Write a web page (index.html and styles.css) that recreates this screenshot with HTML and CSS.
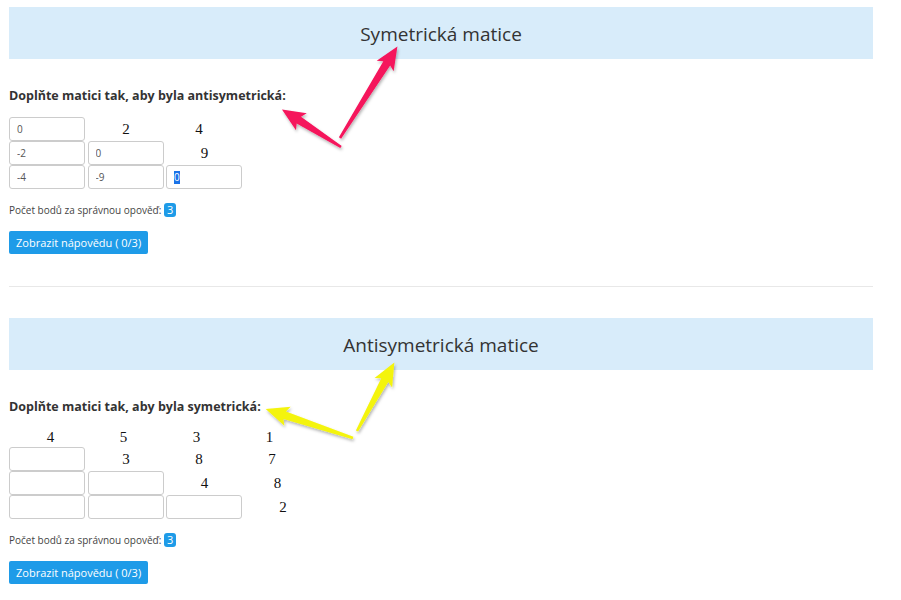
FILE: index.html
```html
<!DOCTYPE html>
<html lang="cs">
<head>
    <meta charset="UTF-8">
    <meta name="viewport" content="width=device-width, initial-scale=1.0">
    <title>Matice</title>
    <link rel="stylesheet" href="styles.css">
</head>
<body>
    <div class="page">
        <section class="task">
            <h2 class="task-title">Symetrická matice</h2>
            <p class="task-label">Doplňte matici tak, aby byla antisymetrická:</p>
            <div class="matrix">
                <div class="mrow">
                    <input class="cell" type="text" value="0">
                    <span class="num">2</span>
                    <span class="num">4</span>
                </div>
                <div class="mrow">
                    <input class="cell" type="text" value="-2">
                    <input class="cell" type="text" value="0">
                    <span class="num">9</span>
                </div>
                <div class="mrow">
                    <input class="cell" type="text" value="-4">
                    <input class="cell" type="text" value="-9">
                    <!-- focused input with its text selected -->
                    <div class="cell cell-focus"><span class="sel">0</span></div>
                </div>
            </div>
            <p class="points">Počet bodů za správnou opověď: <span class="badge">3</span></p>
            <button class="btn">Zobrazit nápovědu ( 0/3)</button>
        </section>

        <hr class="divider">

        <section class="task">
            <h2 class="task-title">Antisymetrická matice</h2>
            <p class="task-label">Doplňte matici tak, aby byla symetrická:</p>
            <div class="matrix">
                <div class="mrow mrow-head">
                    <span class="num">4</span>
                    <span class="num">5</span>
                    <span class="num">3</span>
                    <span class="num">1</span>
                </div>
                <div class="mrow">
                    <input class="cell" type="text">
                    <span class="num">3</span>
                    <span class="num">8</span>
                    <span class="num">7</span>
                </div>
                <div class="mrow">
                    <input class="cell" type="text">
                    <input class="cell" type="text">
                    <span class="num">4</span>
                    <span class="num">8</span>
                </div>
                <div class="mrow">
                    <input class="cell" type="text">
                    <input class="cell" type="text">
                    <input class="cell" type="text">
                    <span class="num">2</span>
                </div>
            </div>
            <p class="points">Počet bodů za správnou opověď: <span class="badge">3</span></p>
            <button class="btn">Zobrazit nápovědu ( 0/3)</button>
        </section>
    </div>

    <!-- annotation arrows drawn over the page -->
    <svg class="arrows" width="901" height="600" viewBox="0 0 901 600">
        <defs>
            <filter id="shadow" x="-20%" y="-20%" width="140%" height="140%">
                <feDropShadow dx="1" dy="2" stdDeviation="1.5" flood-color="#000" flood-opacity="0.3"/>
            </filter>
        </defs>
        <g class="pink" filter="url(#shadow)">
            <polygon transform="translate(340 138) rotate(-57.9)" points="0,-1.3 88,-4 85,-10 108,0 85,10 88,4 0,1.3"/>
            <polygon transform="translate(341 147) rotate(-147.5)" points="0,-1.3 50,-4 47,-10 70,0 47,10 50,4 0,1.3"/>
        </g>
        <g class="yellow" filter="url(#shadow)">
            <polygon transform="translate(357 431) rotate(-61.4)" points="0,-1.3 58,-4 55,-10 78,0 55,10 58,4 0,1.3"/>
            <polygon transform="translate(353 438) rotate(-161.6)" points="0,-1.3 72,-4 69,-10 92,0 69,10 72,4 0,1.3"/>
        </g>
    </svg>
</body>
</html>
```

FILE: styles.css
```css
html, body {
    margin: 0;
    font-family: "Open Sans", "DejaVu Sans", sans-serif;
    color: #333;
    background: #fff;
}

.page {
    width: 864px;
    margin-left: 9px;
    padding-top: 7px;
}

.task-title {
    margin: 0;
    height: 52px;
    line-height: 54px;
    background-color: #d8ecfa;
    text-align: center;
    font-size: 19px;
    font-weight: 400;
    color: #333;
}

.task-label {
    margin: 28px 0 0;
    font-size: 12.5px;
    line-height: 18px;
    font-weight: 700;
    color: #333;
}

.matrix {
    margin-top: 12px;
}

.mrow {
    display: flex;
    align-items: center;
    height: 24px;
}

.mrow-head {
    height: 19px;
}

.cell {
    box-sizing: border-box;
    width: 76px;
    height: 24px;
    margin: 0 2.5px 0 0;
    padding: 0 7px;
    border: 1px solid #ccc;
    border-radius: 3px;
    background: #fff;
    font-family: "Open Sans", "DejaVu Sans", sans-serif;
    font-size: 10px;
    color: #555;
    outline: none;
}

.cell-focus {
    display: flex;
    align-items: center;
}

.sel {
    background-color: #1a73e8;
    color: #fff;
    line-height: 13px;
}

.num {
    width: 73px;
    text-align: center;
    font-family: "Liberation Serif", "DejaVu Serif", serif;
    font-size: 15px;
    color: #111;
}

.cell + .num {
    margin-left: 2px;
}

.mrow-head .num:first-child {
    margin-left: 5px;
}

.points {
    margin: 14px 0 0;
    font-size: 10px;
    line-height: 14px;
    color: #444;
}

.badge {
    display: inline-block;
    padding: 0 3px;
    border-radius: 3px;
    background-color: #1e9be8;
    color: #fff;
    font-size: 11px;
    line-height: 14px;
}

.btn {
    display: block;
    height: 23px;
    margin-top: 14px;
    padding: 0 7px;
    border: 0;
    border-radius: 2px;
    background-color: #1e9be8;
    color: #fff;
    font-family: "Open Sans", "DejaVu Sans", sans-serif;
    font-size: 11px;
    cursor: pointer;
}

.divider {
    margin: 32px 0 31px;
    border: 0;
    border-top: 1px solid #e8e8e8;
}

.arrows {
    position: absolute;
    top: 0;
    left: 0;
    pointer-events: none;
}

.pink polygon {
    fill: #f5145b;
}

.yellow polygon {
    fill: #f4f40c;
}
```
